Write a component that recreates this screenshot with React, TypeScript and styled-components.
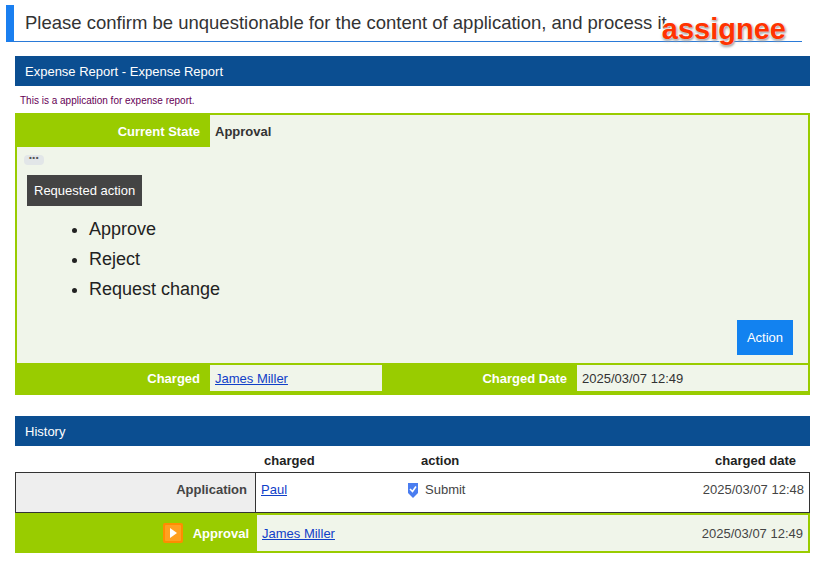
import React from "react";
import styled, { createGlobalStyle } from "styled-components";

const G = createGlobalStyle`
  body { margin: 0; font-family: "Liberation Sans", Arial, sans-serif; background: #fff; color: #222; }
`;
const GREEN = "#99cc00";
const PALE = "#f0f5ea";
const BLUE = "#0b4e91";

const Page = styled.div`padding: 0 18px 0 15px; width: 828px; box-sizing: border-box;`;
const Header = styled.div`
  position: relative; margin: 5px 8px 14px -9px; height: 36px;
  border-left: 8px solid #1a7ff0; border-bottom: 1px solid #2a7ad8;
  display: flex; align-items: center; padding-left: 11px; font-size: 18.5px; color: #333;
`;
const Badge = styled.span`
  position: absolute; right: 16px; top: 8px; font-size: 29px; font-weight: bold; color: #ff3300;
  text-shadow: 0 0 2px #fff, 1px 1px 2px #999, -1px -1px 1px #fff, 0 2px 3px #aaa;
`;
const Bar = styled.div`
  background: ${BLUE}; color: #fff; height: 30px; display: flex; align-items: center;
  padding-left: 10px; font-size: 13px;
`;
const Desc = styled.div`color: #660055; font-size: 10px; padding: 9px 5px 7px;`;
const Box = styled.div`border: 2px solid ${GREEN}; background: ${GREEN};`;
const Row = styled.div<{ $cols: string; $h: number }>`
  display: grid; grid-template-columns: ${p => p.$cols}; height: ${p => p.$h}px;
`;
const Label = styled.div`
  color: #fff; font-weight: bold; font-size: 13px; display: flex; align-items: center;
  justify-content: flex-end; padding-right: 10px;
`;
const Value = styled.div<{ $bold?: boolean }>`
  background: ${PALE}; font-size: 13px; display: flex; align-items: center; padding-left: 5px;
  font-weight: ${p => (p.$bold ? "bold" : "normal")}; color: #333; margin: 2px 0;
`;
const Body = styled.div`
  background: ${PALE}; height: 216px; margin-top: 0; padding: 8px 15px 8px 6px; box-sizing: border-box;
  display: flex; flex-direction: column; position: relative;
`;
const Dots = styled.span`
  width: 20px; height: 10px; border-radius: 4px; background: #e2e6e8; font-size: 8px; line-height: 6px;
  text-align: center; color: #555; font-weight: bold; letter-spacing: 0.5px; margin-left: 1px;
`;
const Tag = styled.div`
  align-self: flex-start; background: #444; color: #fff; font-size: 13px; padding: 8px 7px; margin: 10px 0 0 4px;
`;
const List = styled.ul`margin: 8px 0 0; padding-left: 66px; font-size: 18px; li { line-height: 30px; }`;
const ActionBtn = styled.button`
  position: absolute; right: 15px; bottom: 8px; background: #1282f0; color: #fff; border: 0;
  font-family: inherit; font-size: 13px; width: 56px; height: 35px;
`;
const A = styled.a`color: #1040c8; text-decoration: underline; font-size: 13px;`;
const Gap = styled.div`height: 21px;`;
const HRow = styled.div`
  display: grid; grid-template-columns: 240px 145px 1fr 160px; font-size: 13px; font-weight: bold;
  height: 26px; align-items: end; padding-bottom: 4px; box-sizing: border-box;
`;
const HCell = styled.div<{ $right?: boolean; $pl?: number }>`
  text-align: ${p => (p.$right ? "right" : "left")}; padding-left: ${p => p.$pl ?? 0}px; padding-right: ${p => (p.$right ? 14 : 0)}px;
`;
const TRow = styled.div<{ $cur?: boolean }>`
  display: grid; grid-template-columns: 240px 145px 1fr 160px; font-size: 13px;
  border: ${p => (p.$cur ? `2px solid ${GREEN}` : "1px solid #333")};
  height: ${p => (p.$cur ? 40 : 41)}px; box-sizing: border-box;
  background: ${p => (p.$cur ? PALE : "#fff")};
`;
const TLabel = styled.div<{ $cur?: boolean }>`
  background: ${p => (p.$cur ? GREEN : "#eeeeee")}; color: ${p => (p.$cur ? "#fff" : "#444")};
  font-weight: bold; display: flex; justify-content: flex-end; gap: 10px; padding-right: 8px;
  align-items: ${p => (p.$cur ? "center" : "flex-start")}; padding-top: ${p => (p.$cur ? 0 : 9)}px;
  border-right: ${p => (p.$cur ? "none" : "1px solid #333")};
`;
const TCell = styled.div<{ $right?: boolean; $cur?: boolean }>`
  display: flex; gap: 6px; padding: ${p => (p.$cur ? "0 5px" : "9px 5px 0")}; align-items: ${p => (p.$cur ? "center" : "flex-start")};
  justify-content: ${p => (p.$right ? "flex-end" : "flex-start")}; color: #444;
`;

const Play = () => (
  <svg width="20" height="20" viewBox="0 0 20 20">
    <rect x="0" y="0" width="20" height="20" rx="2" fill="#ff8c00" />
    <rect x="2" y="2" width="16" height="16" rx="1" fill="#ffa020" />
    <path d="M7 5 L14 10 L7 15 Z" fill="#fff" />
  </svg>
);
const Submit = () => (
  <svg width="12" height="16" viewBox="0 0 12 16">
    <path d="M1 1 H11 V11 L6 16 L1 11 Z" fill="#4a7df0" />
    <path d="M3 7 L5.5 9.5 L9 4.5" stroke="#fff" strokeWidth="1.6" fill="none" />
  </svg>
);

export default function App() {
  return (
    <>
      <G />
      <Page>
        <Header>
          Please confirm be unquestionable for the content of application, and process it.
          <Badge>assignee</Badge>
        </Header>
        <Bar>Expense Report - Expense Report</Bar>
        <Desc>This is a application for expense report.</Desc>
        <Box>
          <Row $cols="193px 1fr" $h={32}>
            <Label>Current State</Label>
            <Value $bold style={{ margin: 0 }}>Approval</Value>
          </Row>
          <Body>
            <Dots>•••</Dots>
            <Tag>Requested action</Tag>
            <List>
              <li>Approve</li>
              <li>Reject</li>
              <li>Request change</li>
            </List>
            <ActionBtn>Action</ActionBtn>
          </Body>
          <Row $cols="193px 172px 195px 1fr" $h={30}>
            <Label>Charged</Label>
            <Value><A href="#">James Miller</A></Value>
            <Label>Charged Date</Label>
            <Value>2025/03/07 12:49</Value>
          </Row>
        </Box>
        <Gap />
        <Bar>History</Bar>
        <HRow>
          <div />
          <HCell $pl={9}>charged</HCell>
          <HCell $pl={21}>action</HCell>
          <HCell $right>charged date</HCell>
        </HRow>
        <TRow>
          <TLabel>Application</TLabel>
          <TCell><A href="#">Paul</A></TCell>
          <TCell style={{ paddingLeft: 6 }}><Submit />Submit</TCell>
          <TCell $right>2025/03/07 12:48</TCell>
        </TRow>
        <TRow $cur>
          <TLabel $cur><Play />Approval</TLabel>
          <TCell $cur><A href="#">James Miller</A></TCell>
          <TCell $cur />
          <TCell $cur $right>2025/03/07 12:49</TCell>
        </TRow>
      </Page>
    </>
  );
}
